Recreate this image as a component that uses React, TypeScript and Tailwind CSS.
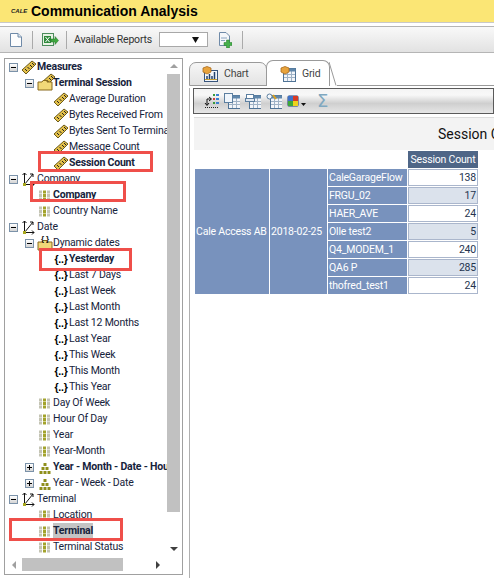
import type { ReactNode } from 'react'

type IconName = 'ruler' | 'folder' | 'axis' | 'grid' | 'dyn' | 'dynFolder' | 'tree'

interface Row {
  label: string
  level: 0 | 1 | 2
  icon: IconName
  toggle?: 'minus' | 'plus'
  bold?: boolean
  selected?: boolean
}

const ROWS: Row[] = [
  { label: 'Measures', level: 0, icon: 'ruler', toggle: 'minus', bold: true },
  { label: 'Terminal Session', level: 1, icon: 'folder', toggle: 'minus', bold: true },
  { label: 'Average Duration', level: 2, icon: 'ruler' },
  { label: 'Bytes Received From', level: 2, icon: 'ruler' },
  { label: 'Bytes Sent To Terminal', level: 2, icon: 'ruler' },
  { label: 'Message Count', level: 2, icon: 'ruler' },
  { label: 'Session Count', level: 2, icon: 'ruler', bold: true },
  { label: 'Company', level: 0, icon: 'axis', toggle: 'minus' },
  { label: 'Company', level: 1, icon: 'grid', bold: true },
  { label: 'Country Name', level: 1, icon: 'grid' },
  { label: 'Date', level: 0, icon: 'axis', toggle: 'minus' },
  { label: 'Dynamic dates', level: 1, icon: 'dynFolder', toggle: 'minus' },
  { label: 'Yesterday', level: 2, icon: 'dyn', bold: true },
  { label: 'Last 7 Days', level: 2, icon: 'dyn' },
  { label: 'Last Week', level: 2, icon: 'dyn' },
  { label: 'Last Month', level: 2, icon: 'dyn' },
  { label: 'Last 12 Months', level: 2, icon: 'dyn' },
  { label: 'Last Year', level: 2, icon: 'dyn' },
  { label: 'This Week', level: 2, icon: 'dyn' },
  { label: 'This Month', level: 2, icon: 'dyn' },
  { label: 'This Year', level: 2, icon: 'dyn' },
  { label: 'Day Of Week', level: 1, icon: 'grid' },
  { label: 'Hour Of Day', level: 1, icon: 'grid' },
  { label: 'Year', level: 1, icon: 'grid' },
  { label: 'Year-Month', level: 1, icon: 'grid' },
  { label: 'Year - Month - Date - Hour', level: 1, icon: 'tree', toggle: 'plus', bold: true },
  { label: 'Year - Week - Date', level: 1, icon: 'tree', toggle: 'plus' },
  { label: 'Terminal', level: 0, icon: 'axis', toggle: 'minus' },
  { label: 'Location', level: 1, icon: 'grid' },
  { label: 'Terminal', level: 1, icon: 'grid', bold: true, selected: true },
  { label: 'Terminal Status', level: 1, icon: 'grid' },
]

const LEVEL_PAD = ['pl-[4px]', 'pl-[20px]', 'pl-[36px]']

const SESSIONS: [string, number][] = [
  ['CaleGarageFlow', 138],
  ['FRGU_02', 17],
  ['HAER_AVE', 24],
  ['Olle test2', 5],
  ['Q4_MODEM_1', 240],
  ['QA6 P', 285],
  ['thofred_test1', 24],
]

function Ruler({ x = 0, y = 0 }: { x?: number; y?: number }) {
  return (
    <g transform={`translate(${x} ${y})`}>
      <path d="M1 11 L11 2 L15 5 L5 15 Z" fill="#e3c04a" stroke="#6b5a1c" strokeWidth="1" />
      <path d="M4 10 L6 12 M6.5 8 L8.5 10 M9 6 L11 8 M11 4 L13 6" stroke="#222" strokeWidth="1" />
    </g>
  )
}

function Folder() {
  return <path d="M1 15 V7 H5 L6 5.500 H10 V7 H15 V15 Z" fill="#f2d878" stroke="#8a6a1e" strokeWidth="1" />
}

function TreeIcon({ name }: { name: IconName }) {
  let body: ReactNode = null
  if (name === 'ruler') body = <Ruler />
  if (name === 'folder')
    body = (
      <>
        <Ruler x={3} y={-3} />
        <Folder />
      </>
    )
  if (name === 'dynFolder')
    body = (
      <>
        <Folder />
        <text x="4" y="6" fontSize="8" fontWeight="700" fontFamily="'Liberation Sans', sans-serif" fill="#111">
          {'{ }'}
        </text>
      </>
    )
  if (name === 'axis')
    body = (
      <>
        <path d="M3.500 2 V13.500 M3.500 13.500 H13 M3.500 13.500 L12 3" stroke="#111" strokeWidth="1" fill="none" />
        <path d="M1.500 4 L3.500 2 L5.500 4 M11 11.500 L13 13.500 L11 15.500 M9 3 H12 V6" stroke="#111" strokeWidth="1" fill="none" />
        <rect x="2" y="12" width="3" height="3" fill="#a8a81e" />
      </>
    )
  if (name === 'grid')
    body = [0, 1, 2].flatMap((r) =>
      [0, 1, 2].map((c) => (
        <rect
          key={`${r}${c}`}
          x={2 + c * 4}
          y={3.5 + r * 3.500}
          width="3"
          height="3"
          fill={c === 1 ? '#a3a32c' : '#c4c4b4'}
        />
      )),
    )
  if (name === 'tree')
    body = [
      [6.500, 4],
      [4.500, 8],
      [8.500, 8],
      [2.500, 12],
      [6.500, 12],
      [10.500, 12],
    ].map(([x, y]) => <rect key={`${x}-${y}`} x={x} y={y} width="3" height="3" fill="#8f8f1c" />)
  if (name === 'dyn')
    body = (
      <text x="8" y="12" textAnchor="middle" fontSize="10.5" fontWeight="700" fontFamily="'Liberation Sans', sans-serif" fill="#000">
        {'{..}'}
      </text>
    )
  return (
    <svg width="16" height="16" viewBox="0 0 16 16" className="shrink-0 overflow-visible">
      {body}
    </svg>
  )
}

function Toggle({ type }: { type: 'minus' | 'plus' }) {
  return (
    <span className="relative block h-[9px] w-[9px] shrink-0 border border-[#7b92a9] bg-[linear-gradient(#ffffff,#d4d4d4)]">
      <span className="absolute left-[1px] top-[3px] h-[1px] w-[5px] bg-black" />
      {type === 'plus' && <span className="absolute left-[3px] top-[1px] h-[5px] w-[1px] bg-black" />}
    </span>
  )
}

function TreeRow({ row }: { row: Row }) {
  return (
    <div className={`flex h-4 items-center whitespace-nowrap ${LEVEL_PAD[row.level]}`}>
      <span className="w-3 shrink-0">{row.toggle && <Toggle type={row.toggle} />}</span>
      <TreeIcon name={row.icon} />
      <span className={`${row.bold ? 'font-bold' : ''} ${row.selected ? 'bg-[#c4c4c4]' : ''}`}>{row.label}</span>
    </div>
  )
}

function Arrow({ dir }: { dir: 'up' | 'down' | 'left' | 'right' }) {
  const points = {
    up: '1,6 5,2 9,6',
    down: '1,3 9,3 5,7',
    left: '7,1 7,9 3,5',
    right: '3,1 3,9 7,5',
  }[dir]
  return (
    <svg width="10" height="10" viewBox="0 0 10 10">
      <polygon points={points} fill={dir === 'down' || dir === 'right' ? '#404040' : '#a0a0a0'} />
    </svg>
  )
}

function TreePanel() {
  return (
    <div className="relative ml-[4px] mt-[5px] h-[517px] w-[179px] shrink-0 border border-[#a0a0a0] bg-white">
      <div className="flex h-[497px]">
        <div className="w-[162px] shrink-0 overflow-hidden">
          {ROWS.map((row, i) => (
            <TreeRow key={i} row={row} />
          ))}
        </div>
        <div className="flex w-[13px] flex-col items-center bg-white">
          <div className="flex h-[15px] items-center"><Arrow dir="up" /></div>
          <div className="h-[438px] w-full bg-[#c1c1c1]" />
          <div className="flex-1" />
          <div className="flex h-[15px] items-center"><Arrow dir="down" /></div>
        </div>
      </div>
      <div className="flex h-[17px] items-center">
        <div className="flex w-[17px] justify-center"><Arrow dir="left" /></div>
        <div className="h-[13px] w-[101px] bg-[#c1c1c1]" />
        <div className="ml-[28px] flex w-[14px] justify-center"><Arrow dir="right" /></div>
      </div>
    </div>
  )
}

function PageIcon() {
  return (
    <svg width="14" height="16" viewBox="0 0 14 16">
      <path d="M1.500 1.500 H9 L12.500 5 V14.500 H1.500 Z" fill="#fdfdfd" stroke="#6f8aa8" />
      <path d="M9 1.500 V5 H12.500" fill="#dfe7f0" stroke="#6f8aa8" />
    </svg>
  )
}

function ExcelIcon() {
  return (
    <svg width="18" height="16" viewBox="0 0 18 16">
      <rect x="1.500" y="1.500" width="11" height="12" fill="#e8f2e4" stroke="#4c8c5c" />
      <rect x="3" y="4" width="7" height="7" fill="#2f8a3c" />
      <path d="M4.500 5 L8.500 10 M8.500 5 L4.500 10" stroke="#fff" />
      <path d="M10 7 H14 V4.500 L17.500 8.500 L14 12.500 V10 H10 Z" fill="#3ea83e" stroke="#26752a" strokeWidth="0.500" />
    </svg>
  )
}

function AddReportIcon() {
  return (
    <svg width="14" height="16" viewBox="0 0 14 16">
      <path d="M1.500 0.500 H8 L11.500 4 V13.500 H1.500 Z" fill="#f5f7fa" stroke="#6f8aa8" />
      <path d="M3 6 H9 M3 8.500 H7" stroke="#8ba4c0" />
      <path d="M8.500 8 H11.500 V10.500 H14 V13.500 H11.500 V16 H8.500 V13.500 H6 V10.500 H8.500 Z" fill="#46b04a" stroke="#277a2c" strokeWidth="0.500" />
    </svg>
  )
}

function GridBase({ x = 4 }: { x?: number }) {
  return (
    <>
      <rect x={x + 0.5} y="2.500" width="12" height="13" fill="#f2f5f9" stroke="#4f7396" />
      <path d={`M${x + 4.5} 5 V15 M${x + 8.5} 5 V15 M${x + 1} 8.500 H${x + 12} M${x + 1} 11.500 H${x + 12}`} stroke="#9fb2c6" strokeWidth="1" />
      <rect x={x + 0.5} y="2.500" width="12" height="3" fill="#5f86aa" />
    </>
  )
}

function GridToolbar() {
  return (
    <div className="mt-[2px] ml-[3px] flex h-[26px] items-center gap-[5px] border border-[#5a5a5a] bg-[linear-gradient(#f4f4f4,#f8f8f8_25%,#cfcfcf_60%,#e6e6e6)] pl-[9px]">
      <svg width="16" height="16" viewBox="0 0 16 16">
        <path d="M2 14.500 H16" stroke="#222" strokeDasharray="1 1" />
        <path d="M4 12 V6 H8 M6 4 L8.500 6 L6 8 M2 10 L4 12.500 L6 10" stroke="#111" fill="none" />
        <rect x="10" y="1" width="2" height="2" fill="#3a9a3a" />
        <rect x="13" y="1" width="3" height="2" fill="#3b7fd0" />
        <rect x="10" y="5" width="2" height="2" fill="#d04040" />
        <rect x="13" y="5" width="3" height="2" fill="#3b7fd0" />
        <rect x="10" y="9" width="2" height="2" fill="#3a9a3a" />
        <rect x="13" y="9" width="3" height="2" fill="#3b7fd0" />
      </svg>
      <svg width="16" height="16" viewBox="0 0 16 16">
        <GridBase />
        <rect x="0.500" y="0.500" width="8" height="9" fill="#f0f6fc" stroke="#5c7fa0" />
      </svg>
      <svg width="16" height="16" viewBox="0 0 16 16">
        <GridBase />
        <rect x="1.500" y="1.500" width="7" height="5" fill="#fff" stroke="#5c7fa0" />
        <rect x="0.500" y="5.500" width="9" height="3" fill="#dfe7f0" stroke="#5c7fa0" />
      </svg>
      <svg width="16" height="16" viewBox="0 0 16 16">
        <GridBase />
        <circle cx="3.500" cy="3.500" r="2.500" fill="#f4f8fc" stroke="#5c7fa0" />
        <path d="M7 2 L10 6" stroke="#d9a020" strokeWidth="2" />
      </svg>
      <span className="flex items-end">
        <svg width="12" height="12" viewBox="0 0 12 12">
          <rect x="0.500" y="0.500" width="11" height="11" rx="1.500" fill="#203a70" />
          <rect x="1" y="1" width="5" height="5" fill="#3f72c8" />
          <rect x="6" y="1" width="5" height="5" fill="#d83a24" />
          <rect x="1" y="6" width="5" height="5" fill="#3da83a" />
          <rect x="6" y="6" width="5" height="5" fill="#eed21c" />
        </svg>
        <svg width="7" height="5" viewBox="0 0 7 5" className="ml-[1px]">
          <polygon points="1,1 6,1 3.500,4" fill="#111" />
        </svg>
      </span>
      <span className="ml-[5px] text-[18px] leading-none text-[#7fa8c0] [font-family:'DejaVu_Sans',sans-serif]">Σ</span>
    </div>
  )
}

function TabIcon({ chart }: { chart?: boolean }) {
  return (
    <svg width="16" height="16" viewBox="0 0 16 16" className="overflow-visible">
      {chart ? (
        <>
          <rect x="2.500" y="4.500" width="13" height="11" fill="#f3f6fa" stroke="#38557c" />
          <path d="M5 14 V10 M7.500 14 V8 M10 14 V10 M12.500 14 V6" stroke="#22406c" strokeWidth="1.500" />
          <path d="M3 13.500 H15" stroke="#c9a032" />
        </>
      ) : (
        <GridBase x={3} />
      )}
      <path d="M5 0.500 L9 2 V6 L5 8 L1 6 V2 Z" fill="#e8a33c" stroke="#a86a1c" strokeWidth="0.800" />
    </svg>
  )
}

function ReportPanel() {
  return (
    <div className="ml-[6px] mt-[7px] min-w-0 flex-1 overflow-hidden">
      <div className="flex h-[26px] items-end">
        <div className="flex h-[24px] w-[78px] items-center gap-[6px] rounded-t-[7px] border border-[#9a9a9a] bg-[linear-gradient(#f6f6f6,#e3e3e3)] pl-[12px] text-[#444]">
          <TabIcon chart />
          Chart
        </div>
        <div className="-ml-[1px] flex h-[26px] w-[64px] items-center gap-[6px] rounded-t-[7px] border border-b-0 border-[#9a9a9a] bg-white pl-[13px] text-[#444]">
          <TabIcon />
          Grid
        </div>
        <svg width="8" height="26" viewBox="0 0 8 26" className="-ml-[1px] shrink-0">
          <path d="M0 2 L7 25.500" stroke="#9a9a9a" fill="none" />
        </svg>
        <div className="h-[1px] flex-1 bg-[#9a9a9a]" />
      </div>
      <div className="h-[492px] border-l border-[#b0b0b0]">
        <GridToolbar />
        <div className="mt-[3px] ml-[4px] flex h-[33px] items-center whitespace-nowrap border-t border-[#dcdcdc] bg-[#f3f3f3] pl-[244px] text-[14px] tracking-normal text-[#111]">
          Session Count
        </div>
        <table className="ml-[4px] w-[285px] table-fixed border-separate border-spacing-[1px] leading-[15px] text-white">
          <colgroup>
            <col className="w-[74px]" />
            <col className="w-[57px]" />
            <col className="w-[79px]" />
            <col className="w-[70px]" />
          </colgroup>
          <thead>
            <tr>
              <th colSpan={3} className="h-[17px] p-0" />
              <th className="h-[17px] whitespace-nowrap bg-[#4f6687] p-0 text-center font-normal">Session Count</th>
            </tr>
          </thead>
          <tbody>
            {SESSIONS.map(([name, count], i) => (
              <tr key={name}>
                {i === 0 && (
                  <>
                    <td rowSpan={7} className="whitespace-nowrap bg-[#7892bd] p-0 pl-[1px]">Cale Access AB</td>
                    <td rowSpan={7} className="whitespace-nowrap bg-[#7892bd] p-0 pl-[1px]">2018-02-25</td>
                  </>
                )}
                <td className="h-[17px] whitespace-nowrap bg-[#7892bd] p-0 pl-[1px]">{name}</td>
                <td className={`h-[17px] border border-[#aab6cc] p-0 pr-[1px] text-right text-[#24344f] ${i % 2 ? 'bg-[#dbe2ec]' : 'bg-white'}`}>{count}</td>
              </tr>
            ))}
          </tbody>
        </table>
      </div>
    </div>
  )
}

export default function App() {
  return (
    <div className="relative h-[578px] w-[494px] overflow-hidden bg-white text-[10.5px] leading-4 tracking-[-0.2px] text-[#16233c] [font-family:Roboto,'Liberation_Sans',sans-serif]">
      <div className="flex h-[23px] items-center border-b border-[#c9c9c9] bg-[#fbe675] pl-[11px] tracking-normal [font-family:'Liberation_Sans',sans-serif]">
        <span className="w-[20px] text-[6px] font-black italic leading-none text-[#222]">CALE</span>
        <span className="text-[14px] font-bold leading-none text-black">Communication Analysis</span>
      </div>
      <div className="mt-[3px] flex h-[27px] items-center border-y border-[#b5b5b5] bg-[linear-gradient(#f9f9f9,#e2e2e2)] pl-[9px] text-[#333]">
        <PageIcon />
        <span className="ml-[9px] h-[18px] w-[1px] bg-[#aaa]" />
        <span className="ml-[8px]"><ExcelIcon /></span>
        <span className="ml-[7px] h-[18px] w-[1px] bg-[#aaa]" />
        <span className="ml-[7px] w-[78px] whitespace-nowrap">Available Reports</span>
        <span className="ml-[7px] flex h-[15px] w-[49px] items-center justify-end border border-[#a8a8a8] bg-white pr-[8px]">
          <svg width="7" height="6" viewBox="0 0 7 6">
            <polygon points="0,0 7,0 3.500,6" fill="#111" />
          </svg>
        </span>
        <span className="ml-[10px]"><AddReportIcon /></span>
        <span className="ml-[10px] h-[18px] w-[1px] bg-[#aaa]" />
      </div>
      <div className="flex">
        <TreePanel />
        <ReportPanel />
      </div>
      {/* red annotation boxes drawn on top of the screenshot */}
      <div className="absolute left-[38px] top-[151px] h-[21px] w-[115px] border-[3px] border-[#ef4f4a]" />
      <div className="absolute left-[30px] top-[181px] h-[21px] w-[96px] border-[3px] border-[#ef4f4a]" />
      <div className="absolute left-[39px] top-[248px] h-[23px] w-[93px] border-[3px] border-[#ef4f4a]" />
      <div className="absolute left-[9px] top-[518px] h-[23px] w-[114px] border-[3px] border-[#ef4f4a]" />
    </div>
  )
}
